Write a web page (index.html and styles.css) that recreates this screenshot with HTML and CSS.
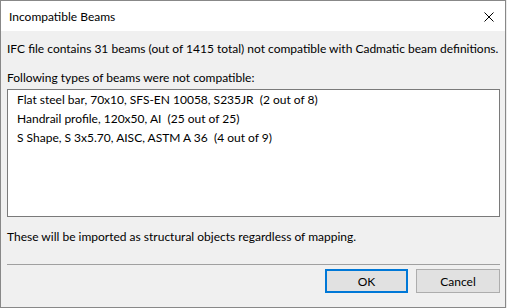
FILE: index.html
```html
<!DOCTYPE html>
<html>
<head>
    <title>Incompatible Beams</title>
    <link rel="stylesheet" href="styles.css">
</head>
<body>
<div class="window">
    <div class="titlebar">
        <span class="title">Incompatible Beams</span>
        <span class="close">
            <svg width="10" height="10" viewBox="0 0 10 10">
                <path d="M0.5 0.5 L9.5 9.5 M9.5 0.5 L0.5 9.5" stroke="#000" stroke-width="1" fill="none"/>
            </svg>
        </span>
    </div>

    <div class="content">
        <p class="summary">IFC file contains 31 beams (out of 1415 total) not compatible with Cadmatic beam definitions.</p>
        <p class="label">Following types of beams were not compatible:</p>
        <ul class="listbox">
            <li>Flat steel bar, 70x10, SFS-EN 10058, S235JR&nbsp; (2 out of 8)</li>
            <li>Handrail profile, 120x50, AI&nbsp; (25 out of 25)</li>
            <li>S Shape, S 3x5.70, AISC, ASTM A 36&nbsp; (4 out of 9)</li>
        </ul>
        <p class="note">These will be imported as structural objects regardless of mapping.</p>
        <div class="separator"></div>
        <div class="buttons">
            <button class="btn btn-default">OK</button>
            <button class="btn btn-cancel">Cancel</button>
        </div>
    </div>
</div>
</body>
</html>
```
FILE: styles.css
```css
* {
    box-sizing: border-box;
}

html, body {
    margin: 0;
    padding: 0;
    background: #ececec;
    font-family: Lato, "Liberation Sans", sans-serif;
    font-size: 12px;
    color: #000;
}

.window {
    width: 506px;
    height: 308px;
    border: 1px solid #888;
    background: #f0f0f0;
    display: flex;
    flex-direction: column;
}

.titlebar {
    height: 30px;
    background: #fff;
    display: flex;
    align-items: center;
    justify-content: space-between;
    padding: 1px 11px 0 8px;
}

.close {
    display: flex;
    width: 10px;
    height: 10px;
}

.content {
    padding: 10px 5px 0 6px;
}

.content p {
    margin: 0;
    line-height: 16px;
}

.label {
    margin-top: 13px !important;
}

.listbox {
    list-style: none;
    margin: 3px 0 0;
    padding: 0;
    height: 128px;
    border: 1px solid #7a7a7a;
    background: #fff;
}

.listbox li {
    height: 19px;
    line-height: 19px;
    padding-left: 9px;
}

.note {
    margin-top: 12px !important;
}

.separator {
    margin-top: 19px;
    height: 1px;
    background: #a0a0a0;
}

.buttons {
    display: flex;
    justify-content: flex-end;
    gap: 8px;
    margin-top: 4px;
}

.btn {
    height: 24px;
    padding: 0;
    background: #e1e1e1;
    border: 1px solid #adadad;
    font-family: inherit;
    font-size: 12px;
    color: #000;
}

.btn-default {
    width: 83px;
    border: 2px solid #0078d7;
}

.btn-cancel {
    width: 84px;
}
```
